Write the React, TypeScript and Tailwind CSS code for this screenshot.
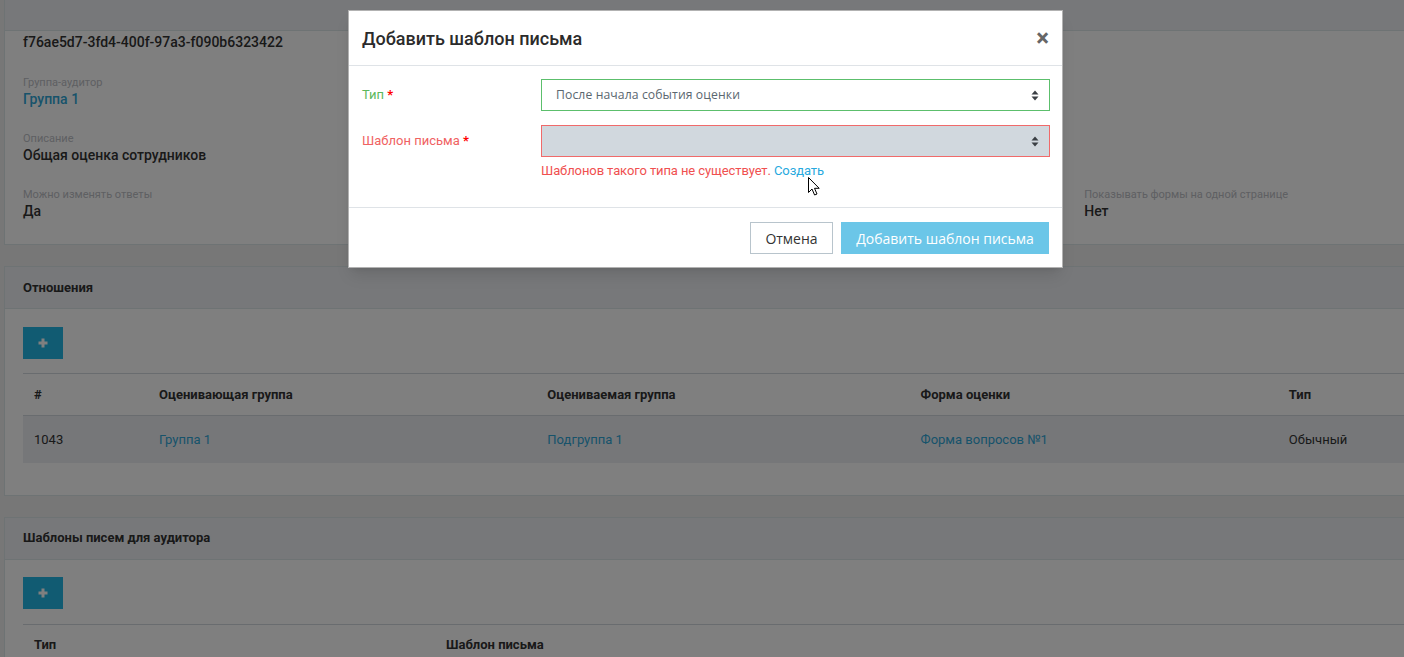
import React from "react";

const cols = [
  { title: "#", w: "w-[125px]" },
  { title: "Оценивающая группа", w: "w-[388px]" },
  { title: "Оцениваемая группа", w: "w-[373px]" },
  { title: "Форма оценки", w: "w-[368px]" },
  { title: "Тип", w: "w-[160px]" },
];

function SortArrows() {
  return (
    <svg width="8" height="11" viewBox="0 0 8 11" className="shrink-0">
      <path d="M4 0.5 L7.5 4.5 L0.5 4.5 Z" fill="#3a3f44" />
      <path d="M4 10.5 L7.5 6.5 L0.5 6.5 Z" fill="#3a3f44" />
    </svg>
  );
}

function Field({ label, value, link, first }: { label: string; value: string; link?: boolean; first?: boolean }) {
  return (
    <div className={"flex flex-col " + (first ? "mt-[25px]" : "mt-[24px]")}>
      <span className="text-[11px] leading-[12px] text-[#bcc0c5]">{label}</span>
      <span className={"text-[14px] leading-5 font-medium " + (link ? "text-[#2fa6d6]" : "text-[#333]")}>{value}</span>
    </div>
  );
}

function PlusButton() {
  return (
    <button className="flex h-[32px] w-[40px] items-center justify-center bg-[#23b7e5]">
      <svg width="10" height="10" viewBox="0 0 10 10">
        <path d="M5 0.5 V9.5 M0.5 5 H9.5" stroke="#fff" strokeWidth="3" />
      </svg>
    </button>
  );
}

function App() {
  return (
    <div className="relative h-[657px] w-[1404px] overflow-hidden bg-[#eeeeee] font-['Roboto',sans-serif] text-[#333]">
      {/* page under the backdrop */}
      <div className="flex w-[1470px] flex-col gap-[21px] pl-[4px]">
        {/* general info card */}
        <div className="w-[1453px] border border-t-0 border-[#dde6e9] bg-white">
          <div className="h-[31px] border-b border-[#dde6e9] bg-[#eef1f5]" />
          <div className="grid grid-cols-4 px-[18px] pt-[1px] pb-[23px]">
            <div className="flex flex-col">
              <span className="text-[14px] leading-5 font-medium">f76ae5d7-3fd4-400f-97a3-f090b6323422</span>
              <Field label="Группа-аудитор" value="Группа 1" link first />
              <Field label="Описание" value="Общая оценка сотрудников" />
              <Field label="Можно изменять ответы" value="Да" />
            </div>
            <div />
            <div />
            <div className="flex flex-col justify-end">
              <Field label="Показывать формы на одной странице" value="Нет" />
            </div>
          </div>
        </div>

        {/* relations */}
        <div className="w-[1453px] border border-[#dde6e9] bg-white">
          <div className="flex h-[42px] items-center border-b border-[#dde6e9] bg-[#eef1f5] px-[18px]">
            <span className="text-[13px] font-bold">Отношения</span>
          </div>
          <div className="px-[18px] pt-[18px] pb-[32px]">
            <PlusButton />
            <table className="mt-[14px] w-full border-collapse text-left text-[13px]">
              <thead>
                <tr className="h-[42px] border-y border-[#d2d9de]">
                  {cols.map((c) => (
                    <th key={c.title} className={"px-[11px] font-bold " + c.w}>
                      {c.title}
                    </th>
                  ))}
                </tr>
              </thead>
              <tbody>
                <tr className="h-[47px] bg-[#eceef3]">
                  <td className="px-[11px]">1043</td>
                  <td className="px-[11px] text-[#2fa6d6]">Группа 1</td>
                  <td className="px-[11px] text-[#2fa6d6]">Подгруппа 1</td>
                  <td className="px-[11px] text-[#2fa6d6]">Форма вопросов №1</td>
                  <td className="px-[11px]">Обычный</td>
                </tr>
              </tbody>
            </table>
          </div>
        </div>

        {/* auditor templates */}
        <div className="w-[1453px] border border-[#dde6e9] bg-white">
          <div className="flex h-[42px] items-center border-b border-[#dde6e9] bg-[#eef1f5] px-[18px]">
            <span className="text-[13px] font-bold">Шаблоны писем для аудитора</span>
          </div>
          <div className="px-[18px] pt-[17px] pb-[32px]">
            <PlusButton />
            <table className="mt-[15px] w-full border-collapse text-left text-[13px]">
              <thead>
                <tr className="h-[42px] border-y border-[#d2d9de]">
                  <th className="w-[412px] px-[11px] font-bold">Тип</th>
                  <th className="px-[11px] font-bold">Шаблон письма</th>
                </tr>
              </thead>
            </table>
          </div>
        </div>
      </div>

      {/* backdrop */}
      <div className="absolute inset-0 bg-black/50" />

      {/* modal */}
      <div className="absolute top-[10px] left-[348px] w-[715px] border border-black/30 bg-white shadow-lg">
        <div className="flex h-[55px] items-center justify-between border-b border-[#dfe3e7] px-[13px]">
          <h4 className="text-[18px] font-medium text-[#2b2b2b]">Добавить шаблон письма</h4>
          <span className="text-[24px] leading-none font-bold text-[#666]">×</span>
        </div>

        <div className="flex flex-col gap-[14px] pt-[13px] pr-[12px] pb-[27px] pl-[13px]">
          <div className="flex">
            <label className="w-[179px] pt-[7px] text-[13px] leading-[18px] text-[#5cb85c]">
              Тип <span className="font-bold text-[#f00]">*</span>
            </label>
            <div className="flex h-[32px] flex-1 items-center justify-between border border-[#5cbf6c] bg-white pr-[10px] pl-[14px] font-['Open_Sans',sans-serif] text-[12.2px] tracking-[0.1px] text-[#5b6770]">
              <span>После начала события оценки</span>
              <SortArrows />
            </div>
          </div>
          <div className="flex">
            <label className="w-[179px] pt-[7px] text-[13px] leading-[18px] text-[#f06262]">
              Шаблон письма <span className="font-bold text-[#f00]">*</span>
            </label>
            <div className="flex flex-1 flex-col">
              <div className="flex h-[32px] items-center justify-end border border-[#f06a6a] bg-[#d1d8de] pr-[10px]">
                <SortArrows />
              </div>
              <p className="mt-[5px] text-[13px] leading-[18px] tracking-[-0.1px] text-[#f05050]">
                Шаблонов такого типа не существует. <span className="text-[#27a9de]">Создать</span>
              </p>
            </div>
          </div>
        </div>

        <div className="flex justify-end gap-[8px] border-t border-[#dfe3e7] px-[13px] pt-[14px] pb-[13px] font-['Open_Sans',sans-serif] text-[14px]">
          <button className="h-[32px] w-[83px] border border-[#b8c4cc] bg-white text-[#333]">Отмена</button>
          <button className="h-[32px] w-[208px] bg-[#6bc6e8] text-white">Добавить шаблон письма</button>
        </div>
      </div>

      {/* mouse pointer */}
      <svg width="13" height="20" viewBox="0 0 13 20" className="absolute top-[177px] left-[808px]">
        <path d="M0.5 0.5 L0.5 15.5 L4 12 L6.6 18 L9 17 L6.5 11.3 L11.2 11.3 Z" fill="#fff" stroke="#000" strokeWidth="1" strokeLinejoin="round" />
      </svg>
    </div>
  );
}

export default App;
